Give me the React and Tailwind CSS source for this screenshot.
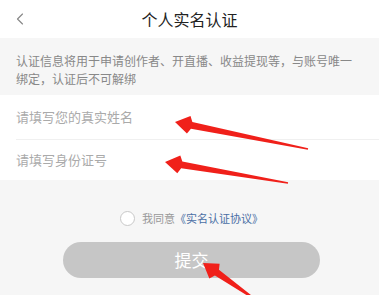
import { ChevronLeft } from 'lucide-react'

const font = { fontFamily: '"Noto Sans CJK SC", "Noto Sans", sans-serif' }

function Arrows() {
  // red hand-drawn annotation arrows laid over the form
  const arrow = (tx, ty, ex, ey, key) => {
    const dx = ex - tx
    const dy = ey - ty
    const len = Math.hypot(dx, dy)
    const ux = dx / len
    const uy = dy / len
    const nx = -uy
    const ny = ux
    const h = 17
    const bx = tx + ux * h
    const by = ty + uy * h
    const pts = [
      [tx, ty],
      [bx + nx * 9 - ux * 3, by + ny * 9 - uy * 3],
      [bx + nx * 3.5, by + ny * 3.5],
      [ex + nx * 0.8, ey + ny * 0.8],
      [ex - nx * 0.8, ey - ny * 0.8],
      [bx - nx * 3.5, by - ny * 3.5],
      [bx - nx * 9 - ux * 3, by - ny * 9 - uy * 3],
    ]
    return <polygon key={key} points={pts.map(p => p.join(',')).join(' ')} fill="#f0201a" />
  }
  return (
    <svg className="absolute inset-0 pointer-events-none" width="379" height="295" viewBox="0 0 379 295">
      {arrow(175, 122, 308, 149, 'a')}
      {arrow(165, 162, 288, 183, 'b')}
      {arrow(203, 263, 256, 300, 'c')}
    </svg>
  )
}

export default function App() {
  return (
    <div className="relative w-[379px] h-[295px] bg-[#f6f6f6] overflow-hidden" style={font}>
      {/* Header */}
      <div className="relative h-[38px] bg-white flex items-center justify-center">
        <ChevronLeft className="absolute left-[10px] top-[9px] w-[20px] h-[20px] text-[#888]" strokeWidth={1.4} />
        <span className="text-[16px] text-[#222]">个人实名认证</span>
      </div>

      {/* Notice */}
      <div className="pt-[14px] pb-[7px] pl-[16px] pr-[16px] text-[12px] leading-[18px] text-[#888]">
        认证信息将用于申请创作者、开直播、收益提现等，与账号唯一<br />绑定，认证后不可解绑
      </div>

      {/* Inputs */}
      <div className="bg-white pl-[16px]">
        <div className="h-[45px] flex items-center border-b border-[#f0f0f0] text-[13px] text-[#aaa]">
          请填写您的真实姓名
        </div>
        <div className="h-[40px] flex items-center text-[13px] text-[#aaa]">
          请填写身份证号
        </div>
      </div>

      {/* Agreement */}
      <div className="mt-[30px] flex items-center justify-center gap-[7px] pl-[4px]">
        <span className="w-[15px] h-[15px] rounded-full border border-[#c8c8c8] bg-white" />
        <span className="text-[11px] text-[#999]">
          我同意<span className="text-[#4a6fa5]">《实名认证协议》</span>
        </span>
      </div>

      {/* Submit */}
      <div className="mt-[15px] ml-[63px] w-[257px] h-[36px] rounded-full bg-[#c6c6c6] flex items-center justify-center">
        <span className="text-[17px] text-white">提交</span>
      </div>

      <Arrows />
    </div>
  )
}
